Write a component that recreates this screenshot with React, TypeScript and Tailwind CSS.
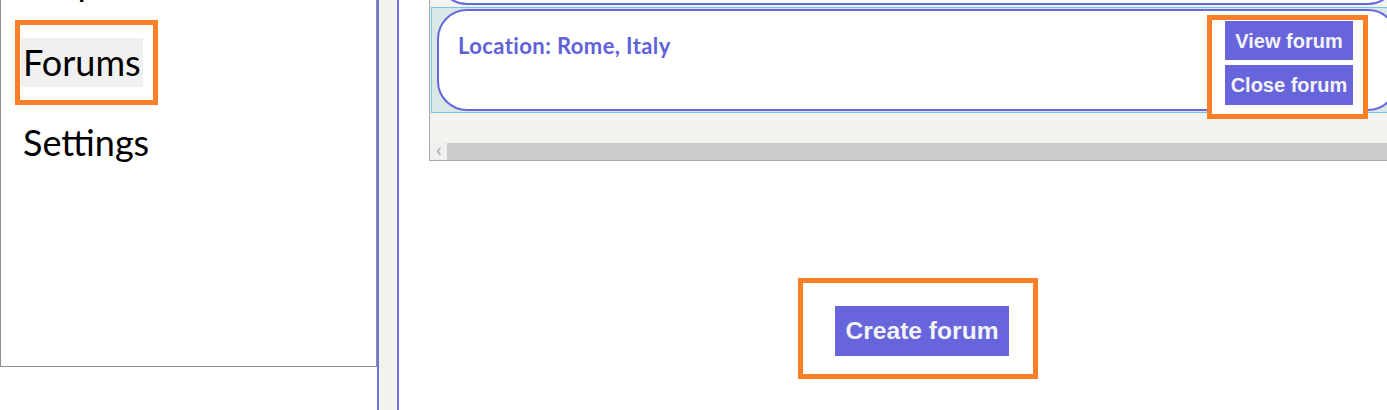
import React from "react";

type Forum = { id: number; location: string; selected?: boolean };

const forums: Forum[] = [
  { id: 1, location: "Paris, France" },
  { id: 2, location: "Rome, Italy", selected: true },
];

const navItems = ["Help", "Forums", "Settings"];

const ForumRow: React.FC<{ forum: Forum }> = ({ forum }) => {
  const [city, country] = forum.location.split(",");
  return (
    <div
      className={`ml-px border py-px pl-[5px] ${
        forum.selected ? "border-[#72c5e6] bg-[#d9e7e7]" : "border-transparent"
      }`}
    >
      <div className="flex h-[102px] w-[961px] justify-between rounded-[30px] border-2 border-[#6666dd] bg-white pl-[19px] pr-[43px]">
        <p className="mt-[22px] font-['Lato',sans-serif] text-[22px] font-bold leading-[1.2] tracking-[0.4px] text-[#6161d9]">
          Location: {city},{country}
        </p>
        <div className="relative mt-[10px] flex flex-col gap-[5px] self-start">
          {forum.selected && (
            <div className="absolute -bottom-[14px] -left-[18px] -right-[15px] -top-[6px] border-[5px] border-[#ff7f27] bg-white" />
          )}
          <button className="relative z-10 h-[39px] w-[128px] bg-[#6764dc] font-['Liberation_Sans',Arial,sans-serif] text-[20px] font-bold text-[#f3f3f3]">
            View forum
          </button>
          <button className="relative z-10 h-[40px] w-[128px] bg-[#6764dc] font-['Liberation_Sans',Arial,sans-serif] text-[20px] font-bold text-[#f3f3f3]">
            Close forum
          </button>
        </div>
      </div>
    </div>
  );
};

export default function App() {
  return (
    <div className="flex h-[410px] w-[1387px] overflow-hidden bg-white">
      {/* Sidebar */}
      <aside className="h-[367px] w-[377px] shrink-0 overflow-hidden border-b border-l border-r border-[#8a9096]">
        <ul className="-mt-[42px] font-['Lato',sans-serif] text-[36px] text-black">
          {navItems.map((item) => (
            <li key={item} className="mb-[31px] h-[49px] pl-[20px] leading-[49px]">
              <span
                className={`relative inline-block px-[2px] ${
                  item === "Forums" ? "bg-[#f0f0f0]" : ""
                }`}
              >
                {item === "Forums" && (
                  <span className="absolute -bottom-[18px] -left-[6px] -right-[15px] -top-[18px] border-[5px] border-[#ff7f27]" />
                )}
                {item}
              </span>
            </li>
          ))}
        </ul>
      </aside>

      {/* Splitter */}
      <div className="h-full w-[22px] shrink-0 border-x-2 border-[#7272e2] bg-[#f3f2ec]" />

      {/* Main */}
      <main className="min-w-0 flex-1 overflow-hidden">
        <div className="ml-[30px] flex h-[161px] w-[1000px] flex-col border-b border-l border-[#a8a8a8] bg-[#f3f2ec]">
          <div className="flex-1 overflow-hidden">
            <div className="-mt-[99px]">
              {forums.map((f) => (
                <ForumRow key={f.id} forum={f} />
              ))}
            </div>
          </div>
          <div className="flex h-[17px] shrink-0">
            <div className="flex w-[17px] items-center justify-center bg-[#f0f0f0]">
              <svg width="6" height="9" viewBox="0 0 6 9">
                <path d="M4.5 1 L1.5 4.5 L4.5 8" fill="none" stroke="#a3a3a3" strokeWidth="1.2" />
              </svg>
            </div>
            <div className="flex-1 bg-[#cdcdcd]" />
          </div>
        </div>

        <div className="ml-[436px] mt-[145px]">
          <div className="relative inline-block">
            <div className="absolute -bottom-[23px] -left-[37px] -right-[29px] -top-[28px] border-[5px] border-[#ff7f27]" />
            <button className="relative h-[50px] w-[174px] bg-[#6764dc] font-['Liberation_Sans',Arial,sans-serif] text-[24.6px] font-bold text-[#f3f3f3]">
              Create forum
            </button>
          </div>
        </div>
      </main>
    </div>
  );
}
